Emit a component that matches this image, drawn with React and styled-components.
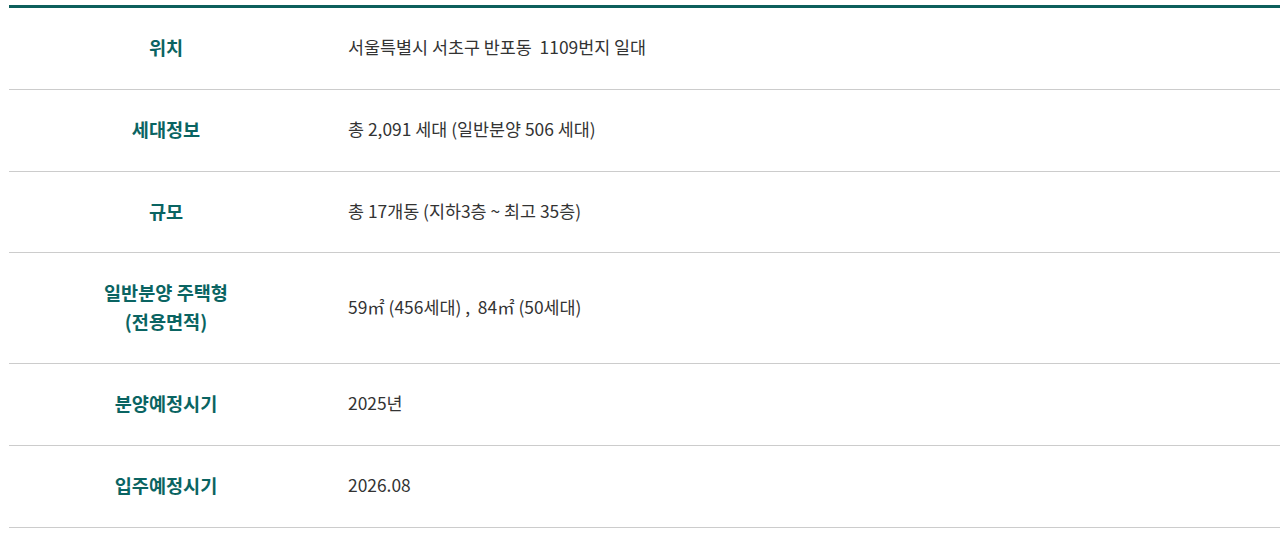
import React from "react";
import styled, { createGlobalStyle } from "styled-components";

const GlobalStyle = createGlobalStyle`
  html, body {
    margin: 0;
    padding: 0;
    background: #fff;
    font-family: "Noto Sans CJK KR", "Noto Sans", sans-serif;
  }
`;

const rows = [
  { label: "위치", value: "서울특별시 서초구 반포동\u00a0 1109번지 일대" },
  { label: "세대정보", value: "총 2,091 세대 (일반분양 506 세대)" },
  { label: "규모", value: "총 17개동 (지하3층 ~ 최고 35층)" },
  {
    label: ["일반분양 주택형", "(전용면적)"],
    value: "59㎡ (456세대) ,  84㎡ (50세대)",
  },
  { label: "분양예정시기", value: "2025년" },
  { label: "입주예정시기", value: "2026.08" },
];

const App = () => {
  return (
    <>
      <GlobalStyle />
      <Wrapper>
        <Table>
          <tbody>
            {rows.map((row, i) => (
              <Row key={i}>
                <Label>
                  {Array.isArray(row.label)
                    ? row.label.map((line, j) => (
                        <React.Fragment key={j}>
                          {j > 0 && <br />}
                          {line}
                        </React.Fragment>
                      ))
                    : row.label}
                </Label>
                <Value>{row.value}</Value>
              </Row>
            ))}
          </tbody>
        </Table>
      </Wrapper>
    </>
  );
};

const Wrapper = styled.div`
  padding: 5px 5px 0 9px;
`;

const Table = styled.table`
  width: 100%;
  border-collapse: collapse;
  border-top: 3px solid #0d5f5c;
`;

const Row = styled.tr`
  border-bottom: 1px solid #cccccc;
`;

const Label = styled.th`
  width: 294px;
  padding: 24px 10px 27.8px;
  font-size: 18.6px;
  font-weight: 700;
  line-height: 29px;
  color: #0a6462;
  text-align: center;
  vertical-align: middle;
`;

const Value = styled.td`
  padding: 24px 10px 27.8px 25px;
  font-size: 17.4px;
  line-height: 29px;
  color: #333333;
  text-align: left;
  vertical-align: middle;
  white-space: pre;
`;

export default App;
